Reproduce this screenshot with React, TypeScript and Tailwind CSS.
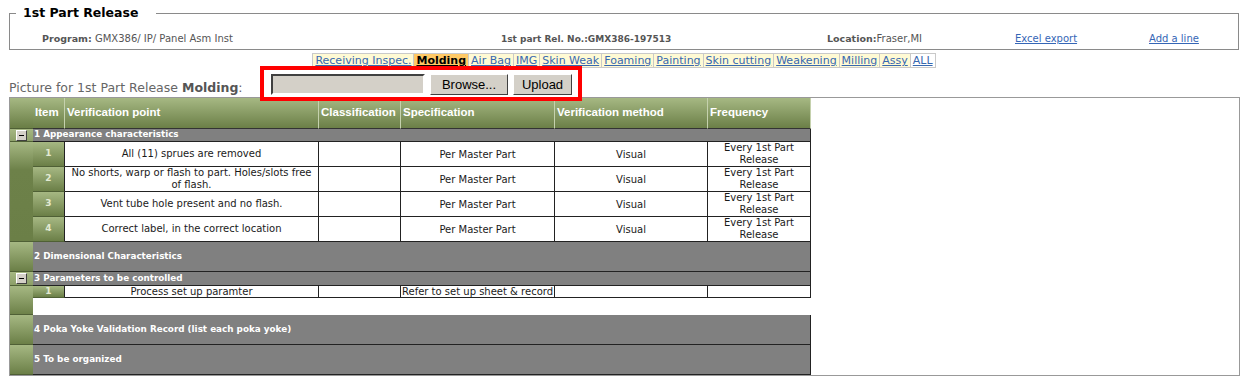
const tabs = [
  "Receiving Inspec.",
  "Molding",
  "Air Bag",
  "IMG",
  "Skin Weak",
  "Foaming",
  "Painting",
  "Skin cutting",
  "Weakening",
  "Milling",
  "Assy",
  "ALL",
]

const checks = [
  { no: 1, point: "All (11) sprues are removed" },
  { no: 2, point: "No shorts, warp or flash to part. Holes/slots free of flash." },
  { no: 3, point: "Vent tube hole present and no flash." },
  { no: 4, point: "Correct label, in the correct location" },
]

const heads = ["Item", "Verification point", "Classification", "Specification", "Verification method", "Frequency"]

function Minus() {
  return (
    <span className="flex h-[11px] w-[11px] items-center justify-center border border-t-white border-l-white border-r-[#404040] border-b-[#404040] bg-[#d4d0c8]">
      <span className="h-[1px] w-[5px] bg-black" />
    </span>
  )
}

function Side({ span, minus }: { span?: string; minus?: boolean }) {
  return (
    <div
      className={`${span ?? ""} flex items-center justify-center border-b border-[#4f6035] bg-[linear-gradient(#a6b883,#6d8149_28px,#6b7f47)]`}
    >
      {minus && <Minus />}
    </div>
  )
}

function Section({ title }: { title: string }) {
  return (
    <div className="col-span-6 flex items-center border-r border-b border-[#222] bg-[#808080] pl-[1px] text-[8.8px] font-bold text-white">
      {title}
    </div>
  )
}

export default function App() {
  return (
    <div className="relative h-[382px] w-[1248px] overflow-hidden bg-white font-['DejaVu_Sans',sans-serif]">
      <fieldset className="mx-[9px] mt-[4px] border border-[#8a8a8a]">
        <legend className="ml-[6px] pl-[7px] pr-[18px] text-[12.5px] leading-[18px] font-bold text-black">1st Part Release</legend>
        <div className="mt-[10px] mb-[3px] flex h-[14px] items-center text-[10px] leading-[14px] text-[#555]">
          <div className="w-[491px] pl-[32px]">
            <b className="text-[9.5px]">Program:</b> GMX386/ IP/ Panel Asm Inst
          </div>
          <div className="w-[326px] text-[9px] font-bold">1st part Rel. No.:GMX386-197513</div>
          <div className="w-[188px]">
            <b className="text-[9.5px]">Location:</b>Fraser,MI
          </div>
          <div className="w-[134px] text-[#3566b6] underline">Excel export</div>
          <div className="text-[#3566b6] underline">Add a line</div>
        </div>
      </fieldset>

      <div className="mt-[3px] flex justify-center">
        <div className="flex border-r border-[#c9c9c9]">
          {tabs.map((t) =>
            t === "Molding" ? (
              <span key={t} className="h-[15px] border-y border-l border-[#c9c9c9] bg-[#ffc966] px-[2px] text-[11px] leading-[13px] font-bold text-black underline">
                {t}
              </span>
            ) : (
              <span
                key={t}
                className={`h-[15px] border-y border-l border-[#c9c9c9] px-[2px] text-[11px] leading-[13px] text-[#3768b0] underline ${t === "ALL" ? "bg-white text-[#2550c8]" : "bg-[#fffad4]"}`}
              >
                {t}
              </span>
            )
          )}
        </div>
      </div>

      <div className="mt-[3px] flex items-end pb-[2px] pl-[9px]">
        <div className="w-[262px] text-[12.5px] leading-[14px] text-[#666]">
          Picture for 1st Part Release <b className="text-[#555]">Molding</b>:
        </div>
        <div className="mt-[3px] flex gap-[5px] font-['Liberation_Sans',sans-serif] text-[13px] text-black">
          <div className="h-[21px] w-[154px] border-2 border-t-[#404040] border-l-[#404040] border-r-white border-b-white bg-[#d4d0c8]" />
          <button className="h-[21px] w-[78px] border border-t-white border-l-white border-r-[#404040] border-b-[#404040] bg-[#d4d0c8] leading-[18px]">
            Browse...
          </button>
          <button className="h-[21px] w-[59px] border border-t-white border-l-white border-r-[#404040] border-b-[#404040] bg-[#d4d0c8] leading-[18px]">
            Upload
          </button>
        </div>
      </div>

      <div className="absolute top-[66px] left-[260px] h-[35px] w-[322px] border-4 border-[#ff0000]" />

      <div className="ml-[9px] w-[1231px] border border-[#999]">
        <div className="grid w-[801px] grid-cols-[23px_32px_254px_82px_154px_153px_103px] grid-rows-[31px_13px_25px_25px_25px_25px_30px_14px_12px_17px_30px_30px] text-[10px] text-[#1a1a1a]">
          <Side />
          {heads.map((h) => (
            <div
              key={h}
              className="flex items-center border-r border-b border-r-[#c5d1ad] border-b-[#333] bg-[linear-gradient(#a6b883,#6b7f47)] pl-[2px] font-['Liberation_Sans',sans-serif] text-[11.5px] font-bold text-white"
            >
              {h}
            </div>
          ))}

          <Side minus />
          <Section title="1 Appearance characteristics" />

          <Side span="row-span-4" />
          {checks.map((c) => (
            <div key={c.no} className="contents">
              <div className="flex items-center justify-center border-r border-b border-r-[#222] border-b-[#4f6035] bg-[linear-gradient(#a6b883,#6b7f47)] text-[9px] font-bold text-[#e3ead3]">
                {c.no}
              </div>
              <div className="flex items-center justify-center border-r border-b border-[#222] px-[4px] text-center leading-[12px]">
                {c.point}
              </div>
              <div className="border-r border-b border-[#222]" />
              <div className="flex items-center justify-center border-r border-b border-[#222]">Per Master Part</div>
              <div className="flex items-center justify-center border-r border-b border-[#222]">Visual</div>
              <div className="flex items-center justify-center border-r border-b border-[#222] text-center leading-[12px]">
                Every 1st Part
                <br />
                Release
              </div>
            </div>
          ))}

          <Side />
          <Section title="2 Dimensional Characteristics" />

          <Side minus />
          <Section title="3 Parameters to be controlled" />

          <Side span="row-span-2" />
          <div className="flex items-center justify-center border-r border-b border-r-[#222] border-b-[#4f6035] bg-[linear-gradient(#a6b883,#6b7f47)] text-[9px] leading-[11px] font-bold text-[#e3ead3]">
            1
          </div>
          <div className="flex items-center justify-center border-r border-b border-[#222] leading-[11px]">Process set up paramter</div>
          <div className="border-r border-b border-[#222]" />
          <div className="flex items-center border-r border-b border-[#222] pl-[1px] leading-[11px]">Refer to set up sheet &amp; record</div>
          <div className="border-r border-b border-[#222]" />
          <div className="border-r border-b border-[#222]" />
          <div className="col-span-6 bg-white" />

          <Side />
          <Section title="4 Poka Yoke Validation Record (list each poka yoke)" />

          <Side />
          <Section title="5 To be organized" />
        </div>
      </div>
    </div>
  )
}
